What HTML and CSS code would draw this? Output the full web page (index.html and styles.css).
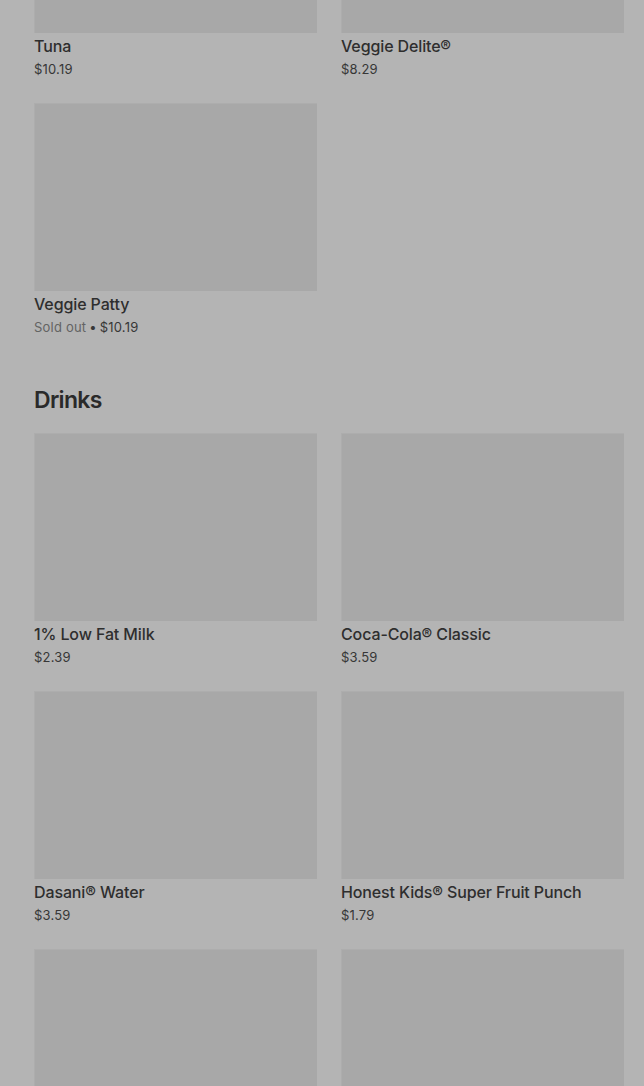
FILE: index.html
```html
<!DOCTYPE html>
<html lang="en">
<head>
<meta charset="utf-8">
<title>Menu</title>
<link rel="stylesheet" href="styles.css">
</head>
<body>
<main class="page">
  <section class="section section-first">
    <div class="grid">
      <div class="card">
        <div class="thumb"></div>
        <div class="name">Tuna</div>
        <div class="price">$10.19</div>
      </div>
      <div class="card">
        <div class="thumb"></div>
        <div class="name">Veggie Delite®</div>
        <div class="price">$8.29</div>
      </div>
      <div class="card">
        <div class="thumb"></div>
        <div class="name">Veggie Patty</div>
        <div class="price"><span class="sold">Sold out</span><span class="sep">•</span>$10.19</div>
      </div>
    </div>
  </section>
  <section class="section">
    <h2 class="heading">Drinks</h2>
    <div class="grid">
      <div class="card">
        <div class="thumb"></div>
        <div class="name">1% Low Fat Milk</div>
        <div class="price">$2.39</div>
      </div>
      <div class="card">
        <div class="thumb"></div>
        <div class="name">Coca-Cola® Classic</div>
        <div class="price">$3.59</div>
      </div>
      <div class="card">
        <div class="thumb"></div>
        <div class="name">Dasani® Water</div>
        <div class="price">$3.59</div>
      </div>
      <div class="card">
        <div class="thumb"></div>
        <div class="name">Honest Kids® Super Fruit Punch</div>
        <div class="price">$1.79</div>
      </div>
      <div class="card">
        <div class="thumb"></div>
      </div>
      <div class="card">
        <div class="thumb"></div>
      </div>
    </div>
  </section>
</main>
</body>
</html>
```
FILE: styles.css
```css
html, body {
  margin: 0;
  padding: 0;
  background: #b4b4b4;
  overflow: hidden;
}
body {
  font-family: Inter, "Noto Sans", "Liberation Sans", sans-serif;
  color: #2b2b2b;
  height: 1086px;
}
.page {
  padding: 0 20px 0 34px;
}
.section-first {
  margin-top: -155px;
  margin-bottom: 23px;
}
.grid {
  display: grid;
  grid-template-columns: 283px 283px;
  column-gap: 24px;
}
.card {
  padding-bottom: 24px;
}
.thumb {
  height: 188px;
  background: #a8a8a8;
  box-shadow: inset 1px 1px 0 #adadad;
}
.name {
  margin-top: 1px;
  font-size: 16px;
  line-height: 24px;
  font-weight: 500;
  color: #2e2e2e;
  letter-spacing: -0.12px;
}
.price {
  margin-top: 1px;
  font-size: 13px;
  line-height: 20px;
  color: #373737;
  letter-spacing: 0.2px;
}
.sold {
  color: #636363;
}
.sep {
  margin: 0 3px 0 3px;
}
.heading {
  margin: 0 0 17px;
  font-size: 23px;
  line-height: 32px;
  font-weight: 600;
  color: #2a2a2a;
  letter-spacing: -0.7px;
}
```
